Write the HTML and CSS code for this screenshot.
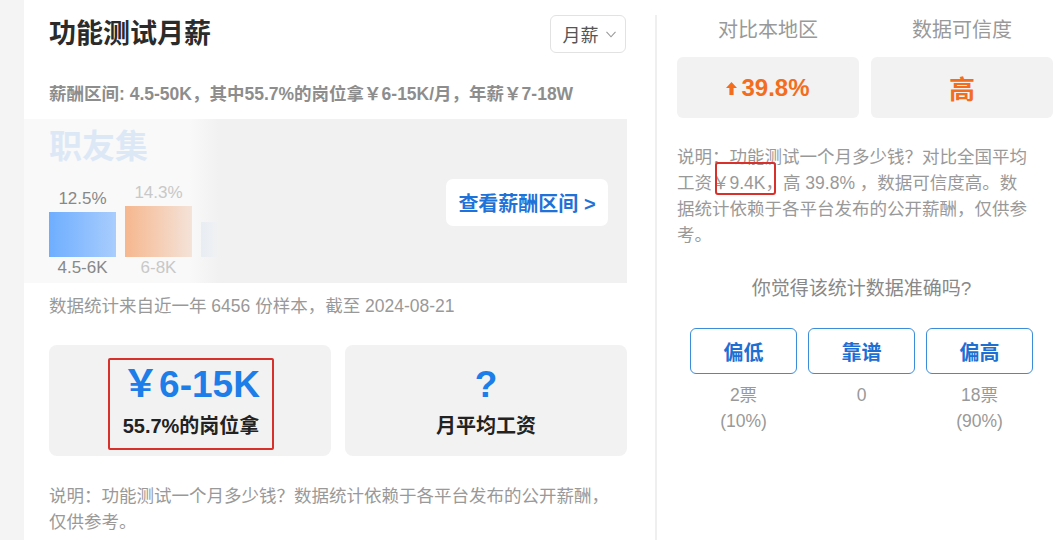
FILE: index.html
```html
<!DOCTYPE html>
<html lang="zh-CN">
<head>
    <meta charset="UTF-8">
    <meta name="viewport" content="width=device-width, initial-scale=1.0">
    <title>功能测试月薪</title>
    <link rel="stylesheet" href="styles.css">
</head>
<body>

<div class="page">
    <div class="gutter"></div>

    <div class="main">
        <div class="head">
            <h2>功能测试月薪</h2>
            <div class="select">月薪
                <svg width="10" height="7" viewBox="0 0 10 7"><path d="M0.5 0.8 L5 5.8 L9.5 0.8" fill="none" stroke="#999" stroke-width="1.1"/></svg>
            </div>
        </div>

        <p class="range-text">薪酬区间: 4.5-50K，其中55.7%的岗位拿￥6-15K/月，年薪￥7-18W</p>

        <div class="chart">
            <div class="chart-left">
                <div class="brand">职友集</div>
                <div class="bars">
                    <div class="bar-col">
                        <span class="pct">12.5%</span>
                        <div class="bar bar-blue"></div>
                        <span class="rng">4.5-6K</span>
                    </div>
                    <div class="bar-col faded">
                        <span class="pct">14.3%</span>
                        <div class="bar bar-orange"></div>
                        <span class="rng">6-8K</span>
                    </div>
                    <div class="bar-col">
                        <span class="pct"></span>
                        <div class="bar bar-ghost"></div>
                        <span class="rng"></span>
                    </div>
                </div>
            </div>
            <a class="range-btn">查看薪酬区间 &gt;</a>
        </div>

        <p class="sample">数据统计来自近一年 6456 份样本，截至 2024-08-21</p>

        <div class="cards">
            <div class="card">
                <div class="stat marked">
                    <div class="value">￥6-15K</div>
                    <div class="label">55.7%的岗位拿</div>
                </div>
            </div>
            <div class="card">
                <div class="stat">
                    <div class="value">?</div>
                    <div class="label">月平均工资</div>
                </div>
            </div>
        </div>

        <p class="note">说明：功能测试一个月多少钱？数据统计依赖于各平台发布的公开薪酬，仅供参考。</p>
    </div>

    <div class="divider"></div>

    <div class="side">
        <div class="compare-head">
            <span>对比本地区</span>
            <span>数据可信度</span>
        </div>
        <div class="compare">
            <div class="compare-box">
                <svg width="11" height="13" viewBox="0 0 11 13"><path d="M5.5 0 L11 6 L7.6 6 L7.6 13 L3.4 13 L3.4 6 L0 6 Z" fill="#f36d1f"/></svg>
                <span>39.8%</span>
            </div>
            <div class="compare-box high">高</div>
        </div>

        <p class="side-note">说明：功能测试一个月多少钱？对比全国平均工资<span class="mark">￥9.4K</span>，高 39.8% ，数据可信度高。数据统计依赖于各平台发布的公开薪酬，仅供参考。</p>

        <div class="vote">
            <p class="question">你觉得该统计数据准确吗?</p>
            <div class="vote-row">
                <div class="vote-col">
                    <button>偏低</button>
                    <div class="count">2票<br>(10%)</div>
                </div>
                <div class="vote-col">
                    <button>靠谱</button>
                    <div class="count">0</div>
                </div>
                <div class="vote-col">
                    <button>偏高</button>
                    <div class="count">18票<br>(90%)</div>
                </div>
            </div>
        </div>
    </div>
</div>

</body>
</html>
```

FILE: styles.css
```css
body {
    margin: 0;
    font-family: "Liberation Sans", "Noto Sans CJK SC", sans-serif;
    background: #fff;
    color: #333;
    width: 1059px;
    height: 540px;
    overflow: hidden;
}
p {
    margin: 0;
}
.page {
    display: flex;
    height: 540px;
}
.gutter {
    width: 24px;
    background: #f4f4f4;
}
.main {
    width: 631px;
    box-sizing: border-box;
    padding: 0 28px 0 25px;
    background: #fff;
}
.head {
    display: flex;
    justify-content: space-between;
    align-items: center;
    padding-top: 15px;
}
.head h2 {
    margin: 0;
    font-size: 27px;
    line-height: 38px;
    color: #2b2b2b;
}
.select {
    box-sizing: border-box;
    width: 76px;
    height: 38px;
    margin-right: 1px;
    border: 1px solid #e2e2e2;
    border-radius: 6px;
    display: flex;
    align-items: center;
    justify-content: center;
    gap: 7px;
    padding-left: 2px;
    font-size: 18px;
    color: #555;
}
.range-text {
    margin-top: 29px;
    font-size: 17.5px;
    line-height: 24px;
    font-weight: bold;
    color: #8d8d8d;
    white-space: nowrap;
}
.chart {
    margin: 13px 0 0 -25px;
    height: 164px;
    box-sizing: border-box;
    padding: 8px 19px 5px 25px;
    display: flex;
    justify-content: space-between;
    align-items: center;
    background: linear-gradient(to right, #f9f9f9 0, #f9f9f9 165px, #f1f1f1 195px);
}
.chart-left {
    align-self: stretch;
}
.brand {
    font-size: 33px;
    line-height: 40px;
    font-weight: bold;
    color: #dde8f7;
}
.bars {
    display: flex;
    align-items: flex-end;
    gap: 9px;
    margin-top: 16px;
}
.bar-col {
    width: 67px;
    display: flex;
    flex-direction: column;
    align-items: center;
}
.pct, .rng {
    font-size: 17px;
    line-height: 20px;
    height: 20px;
    color: #888;
}
.pct {
    margin-bottom: 3px;
}
.rng {
    margin-top: 1px;
}
.faded .pct, .faded .rng {
    color: #c8c8c8;
}
.bar {
    width: 67px;
}
.bar-blue {
    height: 45px;
    background: linear-gradient(to right, #6eaeff, #a9cdfd);
}
.bar-orange {
    height: 51px;
    background: linear-gradient(to right, #f6b78e, #f4e3d9);
}
.bar-ghost {
    height: 35px;
    width: 67px;
    background: linear-gradient(to right, #e8edf4 0, #eef0f3 12px, rgba(241, 241, 241, 0) 18px);
}
.range-btn {
    display: flex;
    align-items: center;
    justify-content: center;
    width: 162px;
    height: 47px;
    background: #fff;
    border-radius: 7px;
    font-size: 20px;
    font-weight: bold;
    color: #1f72d8;
}
.sample {
    margin-top: 10px;
    font-size: 17.5px;
    line-height: 26px;
    color: #999;
}
.cards {
    display: grid;
    grid-template-columns: 1fr 1fr;
    gap: 14px;
    margin-top: 26px;
}
.card {
    height: 111px;
    box-sizing: border-box;
    padding-top: 7px;
    background: #f2f2f2;
    border-radius: 8px;
    display: flex;
    justify-content: center;
    align-items: center;
}
.stat {
    border: 2px solid transparent;
    padding: 4px 12px 10px;
    text-align: center;
}
.stat.marked {
    border-color: #d8302b;
    border-radius: 2px;
    margin-left: 2px;
}
.value {
    font-size: 37px;
    line-height: 42px;
    font-weight: bold;
    color: #1d7de9;
}
.label {
    margin-top: 8px;
    font-size: 20px;
    line-height: 24px;
    font-weight: bold;
    color: #222;
}
.note {
    margin-top: 27px;
    max-width: 570px;
    font-size: 17.5px;
    line-height: 26px;
    color: #999;
}
.divider {
    width: 2px;
    margin-top: 15px;
    background: #efefef;
}
.side {
    flex: 1;
    padding: 0 6px 0 20px;
}
.compare-head, .compare {
    display: grid;
    grid-template-columns: 1fr 1fr;
    gap: 12px;
}
.compare-head {
    padding-top: 16px;
    text-align: center;
    font-size: 20px;
    line-height: 28px;
    color: #999;
}
.compare {
    margin-top: 13px;
}
.compare-box {
    height: 61px;
    background: #f2f2f2;
    border-radius: 6px;
    display: flex;
    align-items: center;
    justify-content: center;
    gap: 4px;
    font-size: 24px;
    font-weight: bold;
    color: #f36d1f;
}
.compare-box svg {
    margin-top: 2px;
}
.compare-box.high {
    font-size: 26px;
}
.side-note {
    margin-top: 26px;
    width: 352px;
    font-size: 17.5px;
    line-height: 26px;
    color: #999;
}
.mark {
    position: relative;
}
.mark::after {
    content: "";
    position: absolute;
    left: 3px;
    top: -11px;
    width: 61px;
    height: 33px;
    box-sizing: border-box;
    border: 2px solid #d8302b;
    border-radius: 3px;
}
.vote {
    width: 343px;
    margin-left: 13px;
}
.question {
    margin-top: 28px;
    text-align: center;
    font-size: 19px;
    line-height: 26px;
    color: #888;
}
.vote-row {
    display: grid;
    grid-template-columns: repeat(3, 107px);
    gap: 11px;
    margin-top: 26px;
}
.vote-col {
    text-align: center;
}
.vote-col button {
    width: 107px;
    height: 46px;
    background: #fff;
    border: 1.5px solid #3b8cd9;
    border-radius: 6px;
    font-family: inherit;
    font-size: 20px;
    font-weight: bold;
    color: #1f6fd3;
}
.count {
    margin-top: 8px;
    font-size: 17.5px;
    line-height: 26px;
    color: #999;
}
```
